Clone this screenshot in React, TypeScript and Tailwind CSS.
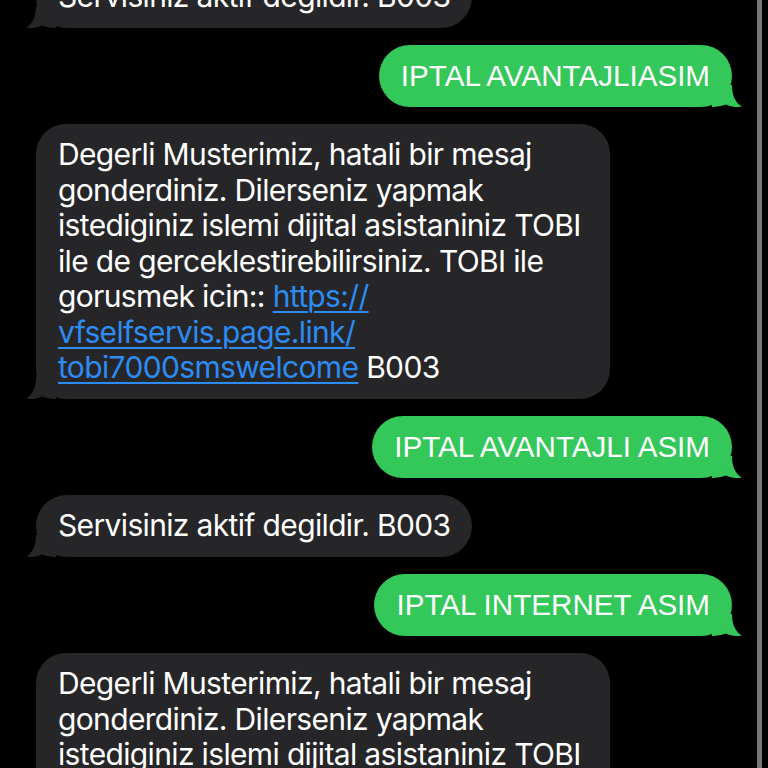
import React from "react";

const GREEN = "#34C759";
const GRAY = "#262628";

function Tail({ side, color }: { side: "left" | "right"; color: string }) {
  const d =
    "M0 0 L20 0 C20 10 23 17.5 30 21.6 C24 22.6 19 21.8 14 19.5 C10 21 5 22 0 22 Z";
  if (side === "right") {
    return (
      <svg className="absolute bottom-0 right-[-10px]" width="30" height="22" viewBox="0 0 30 22">
        <path d={d} fill={color} />
      </svg>
    );
  }
  return (
    <svg className="absolute bottom-0 left-[-10px]" width="30" height="22" viewBox="0 0 30 22">
      <g transform="translate(30 0) scale(-1 1)">
        <path d={d} fill={color} />
      </g>
    </svg>
  );
}

function Sent({ text }: { text: string }) {
  return (
    <div className="flex justify-end">
      <div className="relative">
        <Tail side="right" color={GREEN} />
        <div className="relative flex h-[62px] items-center rounded-[31px] bg-[#34C759] px-[22px] font-['Liberation_Sans',Arial,sans-serif] text-[29.6px] leading-[35.5px] text-white whitespace-nowrap">
          {text}
        </div>
      </div>
    </div>
  );
}

function ReceivedShort({ text }: { text: string }) {
  return (
    <div className="flex justify-start">
      <div className="relative">
        <Tail side="left" color={GRAY} />
        <div className="relative flex h-[62px] items-center rounded-[31px] bg-[#262628] px-[22px] font-['Inter',sans-serif] text-[30px] tracking-[-0.65px] leading-[35.5px] text-white whitespace-nowrap">
          {text}
        </div>
      </div>
    </div>
  );
}

function Link({ children }: { children: React.ReactNode }) {
  return (
    <span className="text-[#2c8cf4] underline decoration-[2px] underline-offset-[4px]">{children}</span>
  );
}

function ReceivedLong() {
  return (
    <div className="flex justify-start">
      <div className="relative">
        <Tail side="left" color={GRAY} />
        <div className="relative w-[574px] rounded-[30px] bg-[#262628] pl-[22px] pr-[20px] pt-[13px] pb-[13.5px] font-['Inter',sans-serif] text-[30px] tracking-[-0.65px] leading-[35.5px] text-white whitespace-nowrap">
          <div>Degerli Musterimiz, hatali bir mesaj</div>
          <div>gonderdiniz. Dilerseniz yapmak</div>
          <div>istediginiz islemi dijital asistaniniz TOBI</div>
          <div>ile de gerceklestirebilirsiniz. TOBI ile</div>
          <div>
            gorusmek icin:: <Link>https://</Link>
          </div>
          <div>
            <Link>vfselfservis.page.link/</Link>
          </div>
          <div>
            <Link>tobi7000smswelcome</Link> B003
          </div>
        </div>
      </div>
    </div>
  );
}

export default function App() {
  return (
    <div className="flex h-[768px] w-[768px] overflow-hidden bg-black">
      <div className="w-[757px] overflow-hidden">
        <div className="mt-[-34px] flex flex-col gap-[17px] pl-[36px] pr-[25px]">
          <ReceivedShort text="Servisiniz aktif degildir. B003" />
          <Sent text="IPTAL AVANTAJLIASIM" />
          <ReceivedLong />
          <Sent text="IPTAL AVANTAJLI ASIM" />
          <ReceivedShort text="Servisiniz aktif degildir. B003" />
          <Sent text="IPTAL INTERNET ASIM" />
          <ReceivedLong />
        </div>
      </div>
      <div className="h-full w-[5px] bg-[#767676]" />
      <div className="h-full flex-1 bg-black" />
    </div>
  );
}
